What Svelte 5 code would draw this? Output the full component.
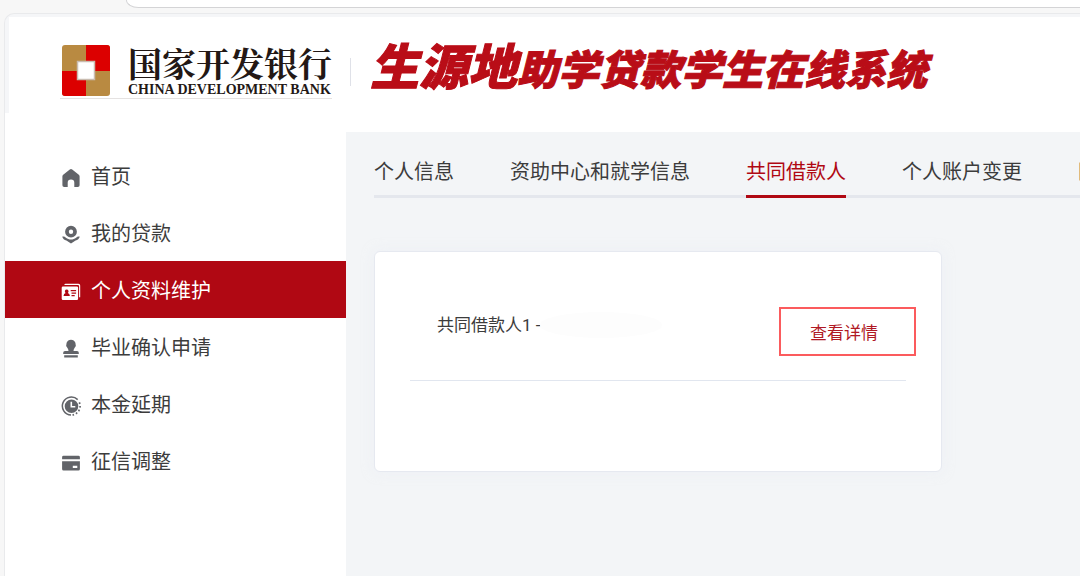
<script>
  const menu = [
    { id: 'home', label: '首页' },
    { id: 'loan', label: '我的贷款' },
    { id: 'profile', label: '个人资料维护' },
    { id: 'stamp', label: '毕业确认申请' },
    { id: 'clock', label: '本金延期' },
    { id: 'card', label: '征信调整' }
  ];
  const tabs = ['个人信息', '资助中心和就学信息', '共同借款人', '个人账户变更', '国'];
  let activeMenu = $state('profile');
  let activeTab = $state('共同借款人');
</script>

<div class="page">
  <div class="chrome"><div class="address"></div></div>
  <div class="window">
    <header>
      <a class="brand" href="#home">
        <svg class="logo" viewBox="0 0 48 51" aria-hidden="true">
          <defs><clipPath id="seal"><rect width="48" height="51" rx="3" /></clipPath></defs>
          <g clip-path="url(#seal)">
            <rect width="48" height="51" fill="#b98a41" />
            <rect x="24" width="24" height="26" fill="#dc0000" />
            <rect y="26" width="24" height="25" fill="#dc0000" />
          </g>
          <rect x="15.5" y="16.5" width="17" height="18" fill="#fff" stroke="#c9bcb0" stroke-width="1.5" />
        </svg>
        <span class="names">
          <span class="cn">国家开发银行</span>
          <span class="en">CHINA DEVELOPMENT BANK</span>
        </span>
      </a>
      <h1><span class="lead">生源地</span>助学贷款学生在线系统</h1>
    </header>

    <div class="body">
      <nav class="side">
        {#each menu as item}
          <a href="#{item.id}" class:active={activeMenu === item.id} onclick={() => (activeMenu = item.id)}>
            <svg viewBox="0 0 20 20" fill="currentColor" aria-hidden="true">
              {#if item.id === 'home'}
                <path d="M8.800 1.500a2 2 0 0 1 2.400 0l6.600 5.300q.8.7.8 1.700v8.700q0 1.800-1.800 1.800h-3.500v-4.300a3.300 3.300 0 0 0-6.600 0v4.300H3.200q-1.800 0-1.800-1.800V8.500q0-1 .8-1.700z" />
              {:else if item.id === 'loan'}
                <path fill-rule="evenodd" d="M10 .8a5.900 5.900 0 1 1 0 11.800 5.900 5.900 0 0 1 0-11.800zm0 3.700a2.200 2.200 0 1 0 0 4.400 2.200 2.200 0 0 0 0-4.400z" />
                <path d="M1.200 11.800c1.500-.5 2.600-.1 3.700.9 1.500 1.100 3.200 1.800 5.100 1.800s3.600-.7 5.100-1.800c1.100-1 2.200-1.400 3.700-.9-.7 1.900-2.100 3.200-4.200 3.800L10 18.500l-4.600-2.900c-2.100-.6-3.500-1.900-4.200-3.800z" />
              {:else if item.id === 'profile'}
                <path d="M4.500 1.800h13q1.700 0 1.700 1.700v11.800h-1.100V4.300q0-1.400-1.400-1.400H3.300q.2-1.100 1.200-1.100z" />
                <path fill-rule="evenodd" d="M2 4.400h13.800q1.300 0 1.300 1.300v11q0 1.300-1.300 1.300H2q-1.300 0-1.300-1.300v-11Q.7 4.400 2 4.400zM5.700 7.500a1.900 1.900 0 0 0-1.100 3.400Q2.700 11.500 2.500 14h6.400q-.2-2.500-2.100-3.100a1.900 1.900 0 0 0-1.100-3.400zm4 .4v1.300h5.400V7.900zm.8 2.700v1.200h4.600v-1.200zm0 2.500v1.100h3.200v-1.100z" />
              {:else if item.id === 'stamp'}
                <path d="M10 .8a4.900 4.900 0 0 1 3.500 8.200q-1 1.300-1 3H16q1.800 0 1.800 1.800v1.200H2.200v-1.200Q2.200 12 4 12h3.500q0-1.700-1-3A4.900 4.900 0 0 1 10 .8zM3.200 16.200h13.600v2.200H3.200z" />
              {:else if item.id === 'clock'}
                <path d="M16.700 3.600A9 9 0 1 0 10 19" fill="none" stroke="currentColor" stroke-width="1.500" />
                <path d="M18.300 6.400A9 9 0 0 1 11.500 19" fill="none" stroke="currentColor" stroke-width="1.700" stroke-dasharray="1.700 2" />
                <path fill-rule="evenodd" d="M10.500 3.400a6.800 6.800 0 1 1 0 13.600 6.800 6.800 0 0 1 0-13.600zM9.500 5.800v5.700h4.800V9.900h-3.200V5.800z" />
              {:else}
                <path d="M2.500 2.800h15q1.400 0 1.400 1.400v2H1.100v-2q0-1.400 1.400-1.400z" />
                <path fill-rule="evenodd" d="M1.100 8.200h17.800v7.900q0 1.500-1.400 1.500h-15q-1.400 0-1.400-1.500zm10.700 4.500v2.300h4.500v-2.300z" />
              {/if}
            </svg>
            {item.label}
          </a>
        {/each}
      </nav>

      <main>
        <div class="tabs" role="tablist">
          {#each tabs as tab}
            <button role="tab" aria-selected={activeTab === tab} onclick={() => (activeTab = tab)}>{tab}</button>
          {/each}
        </div>
        <section class="card">
          <div class="row">
            <span class="person">共同借款人1 -<span class="hidden-name"></span></span>
            <button class="detail">查看详情</button>
          </div>
        </section>
      </main>
    </div>
  </div>
</div>

<style>
  :global(body) {
    margin: 0;
    background: #f7f7f7;
    font-family: Roboto, 'Noto Sans CJK SC', sans-serif;
  }
  .page {
    display: flex;
    flex-direction: column;
    min-height: 100vh;
    overflow: hidden;
    color: #3c3c3c;
  }
  .chrome {
    display: flex;
    height: 13px;
  }
  .address {
    flex: 1;
    height: 7px;
    margin-left: 126px;
    background: #fff;
    border: solid #d4d4d6;
    border-width: 0 0 1px 1px;
    border-bottom-left-radius: 14px 9px;
  }
  .window {
    flex: 1;
    display: flex;
    flex-direction: column;
    margin-left: 4px;
    padding-top: 3px;
    background: #f5f6f8;
    border: solid #e9eaec;
    border-width: 1px 0 0 1px;
    border-top-left-radius: 10px;
  }
  header {
    display: flex;
    align-items: flex-start;
    box-sizing: border-box;
    height: 96px;
    margin-left: 4px;
    padding: 24px 0 0 51px;
    background: #fff;
  }
  .brand {
    display: flex;
    gap: 18px;
    padding: 4px 0 2px 2px;
    border-bottom: 1px solid #e5e2e1;
    color: #231815;
    text-decoration: none;
  }
  .logo {
    width: 48px;
    height: 51px;
  }
  .names {
    display: flex;
    flex-direction: column;
    height: 51px;
    white-space: nowrap;
  }
  .cn {
    font: 700 34px/35px 'Noto Serif CJK SC', 'Noto Sans CJK SC', serif;
  }
  .en {
    font: 700 14px/20px 'Liberation Serif', serif;
  }
  h1 {
    margin: 0 0 0 18px;
    padding-left: 20px;
    color: #b90d17;
    font-family: 'Noto Sans CJK SC', sans-serif;
    font-size: 41px;
    line-height: 46px;
    font-weight: 900;
    font-style: italic;
    white-space: nowrap;
    -webkit-text-stroke: 1px #b90d17;
    background: linear-gradient(#dfe1e8, #dfe1e8) 0 17px / 1px 28px no-repeat;
  }
  .lead {
    font-size: 49px;
  }
  .body {
    flex: 1;
    display: flex;
    background: #fff;
  }
  .side {
    flex: none;
    width: 341px;
    padding-top: 34px;
  }
  .side a {
    display: flex;
    align-items: center;
    gap: 10px;
    box-sizing: border-box;
    height: 57px;
    padding: 0 0 0 56px;
    color: #3c3c3c;
    font-family: 'Noto Sans CJK SC', sans-serif;
    font-size: 20px;
    text-decoration: none;
  }
  .side svg {
    width: 20px;
    height: 20px;
    margin-top: 4px;
    color: #626469;
  }
  .side a.active,
  .side a.active svg {
    color: #fff;
  }
  .side a.active {
    background: #b00813;
  }
  main {
    flex: 1;
    min-width: 0;
    margin-top: 19px;
    padding-left: 28px;
    background: #f3f5f7;
  }
  .tabs {
    display: flex;
    gap: 56px;
    padding-top: 16px;
    overflow: hidden;
    box-shadow: inset 0 -3px #e4e7ed;
  }
  button {
    font-family: 'Noto Sans CJK SC', sans-serif;
    cursor: pointer;
  }
  .tabs button {
    flex: none;
    height: 50px;
    padding: 0 0 3px;
    border: 0;
    border-bottom: 3px solid transparent;
    background: none;
    color: #3c3c3c;
    font-size: 20px;
  }
  .tabs button[aria-selected='true'] {
    color: #b00813;
    border-color: #b00813;
  }
  .card {
    box-sizing: border-box;
    max-width: 568px;
    min-height: 221px;
    margin: 53px 28px 0 0;
    padding: 55px 35px;
    background: #fff;
    border: 1px solid #e6e9f0;
    border-radius: 6px;
    box-shadow: 0 0 12px #e9edf580;
  }
  .row {
    display: flex;
    justify-content: space-between;
    align-items: flex-start;
    padding: 0 0 24px 27px;
    border-bottom: 1px solid #e1e6ef;
  }
  .person {
    display: flex;
    align-items: center;
    font-size: 17px;
    line-height: 36px;
  }
  .hidden-name {
    width: 122px;
    height: 26px;
    border-radius: 50%;
    background: #fdfdfd;
  }
  .detail {
    height: 49px;
    margin-right: -10px;
    padding: 0 36px 0 29px;
    border: 2px solid #fb5b5d;
    background: #fff;
    color: #b01824;
    font-size: 17px;
  }
</style>
